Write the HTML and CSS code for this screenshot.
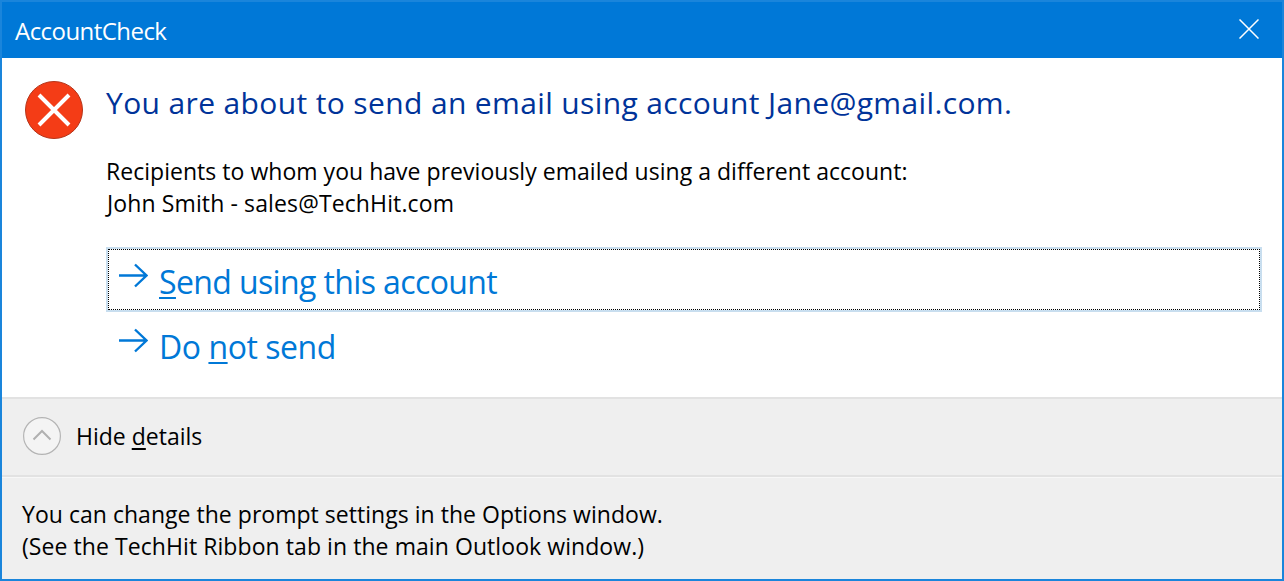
FILE: index.html
```html
<!DOCTYPE html>
<html lang="en">
<head>
<meta charset="utf-8">
<title>AccountCheck</title>
<link rel="stylesheet" href="styles.css">
</head>
<body>
<div class="window">
  <header class="titlebar">
    <span class="title">AccountCheck</span>
    <svg class="close" width="20" height="20" viewBox="0 0 20 20"><path d="M.5.5l19 19M19.5.5l-19 19" stroke="#fff" stroke-width="1.5" fill="none"/></svg>
  </header>
  <main class="content">
    <div class="head">
      <svg class="erricon" width="60" height="60" viewBox="0 0 60 60"><circle cx="30" cy="30" r="28.5" fill="#f43c16" stroke="#b5351a" stroke-width="1"/><path d="M15 15l30 30M45 15l-30 30" stroke="#fff" stroke-width="4" fill="none"/></svg>
      <h1 class="heading">You are about to send an email using account Jane@gmail.com.</h1>
    </div>
    <div class="desc">
      <div>Recipients to whom you have previously emailed using a different account:</div>
      <div class="desc-second">John Smith - sales@TechHit.com</div>
    </div>
    <div class="commands">
      <div class="cmd focused"><div class="cmd-inner focus-inner">
        <svg class="arrow" width="29" height="25" viewBox="0 0 29 25"><path d="M0 12.5h27M16 1.500l11.500 11-11.500 11" stroke="#0078d7" stroke-width="2.4" fill="none"/></svg>
        <span class="cmd-label cmd-send"><u>S</u>end using this account</span>
      </div></div>
      <div class="cmd plain"><div class="cmd-inner plain-inner">
        <svg class="arrow" width="29" height="25" viewBox="0 0 29 25"><path d="M0 12.5h27M16 1.500l11.500 11-11.500 11" stroke="#0078d7" stroke-width="2.4" fill="none"/></svg>
        <span class="cmd-label">Do <u>n</u>ot send</span>
      </div></div>
    </div>
  </main>
  <section class="details">
    <svg class="chev" width="38" height="38" viewBox="0 0 38 38"><circle cx="19" cy="19" r="18.4" fill="#f4f4f4" stroke="#b4b4b4" stroke-width="1.2"/><path d="M10.500 22.500L19 14l8.500 8.500" stroke="#b0b0b0" stroke-width="2" fill="none"/></svg>
    <span class="details-label">Hide <u>d</u>etails</span>
  </section>
  <footer class="foot">
    <div>You can change the prompt settings in the Options window.</div>
    <div class="foot-second">(See the TechHit Ribbon tab in the main Outlook window.)</div>
  </footer>
</div>
</body>
</html>
```
FILE: styles.css
```css
* { box-sizing: border-box; }
html, body { margin: 0; height: 100%; }
body { font-family: "Open Sans", "Noto Sans", sans-serif; color: #000; background: #fff; }
u { text-decoration-thickness: 1.5px; text-underline-offset: 3px; }
.window { width: 1284px; height: 581px; border: 2px solid #1a85db; display: flex; flex-direction: column; background: #fff; overflow: hidden; }
.titlebar { height: 56px; flex: none; background: #0078d7; display: flex; align-items: center; justify-content: space-between; padding: 0 23px 0 13px; }
.title { color: #fff; font-size: 24px; letter-spacing: -0.55px; }
.close { display: block; margin-top: -2px; }
.content { flex: 1; min-height: 0; padding: 22px 0 0 22px; }
.head { display: flex; align-items: center; gap: 22px; }
.erricon { display: block; flex: none; }
.heading { margin: 0 0 14px; font-size: 30px; font-weight: 400; color: #003399; line-height: 44px; letter-spacing: 0.37px; white-space: nowrap; }
.desc { margin: 15px 0 0 82px; font-size: 23px; line-height: 32px; letter-spacing: 0.03px; white-space: nowrap; }
.desc-second { padding-left: 1px; letter-spacing: 0.12px; }
.commands { margin: 28px 0 0 82px; width: 1156px; }
.cmd { border: 2px solid transparent; }
.focused { height: 65px; border-color: #c8deef; }
.plain { height: 61px; margin-top: 4px; }
.cmd-inner { height: 100%; display: flex; align-items: center; gap: 11px; border: 1px dotted transparent; }
.focus-inner { padding: 3px 0 0 10px; border-color: #000; }
.plain-inner { padding: 0 0 1px 10px; }
.arrow { display: block; flex: none; margin-top: -11px; }
.cmd-label { font-size: 32px; color: #0078d7; letter-spacing: -0.45px; white-space: nowrap; }
.cmd-send { letter-spacing: -0.62px; }
.details { height: 80px; flex: none; background: #efefef; border-top: 2px solid #e2e2e2; border-bottom: 2px solid #e2e2e2; display: flex; align-items: center; gap: 15px; padding: 0 0 2px 21px; }
.chev { display: block; flex: none; }
.details-label { font-size: 23px; white-space: nowrap; }
.foot { height: 102px; flex: none; background: #efefef; border-top: 1px solid #f7f7f7; padding: 20px 0 0 20px; font-size: 23px; line-height: 32px; letter-spacing: 0.03px; white-space: nowrap; }
.foot-second { letter-spacing: 0.07px; }
```
